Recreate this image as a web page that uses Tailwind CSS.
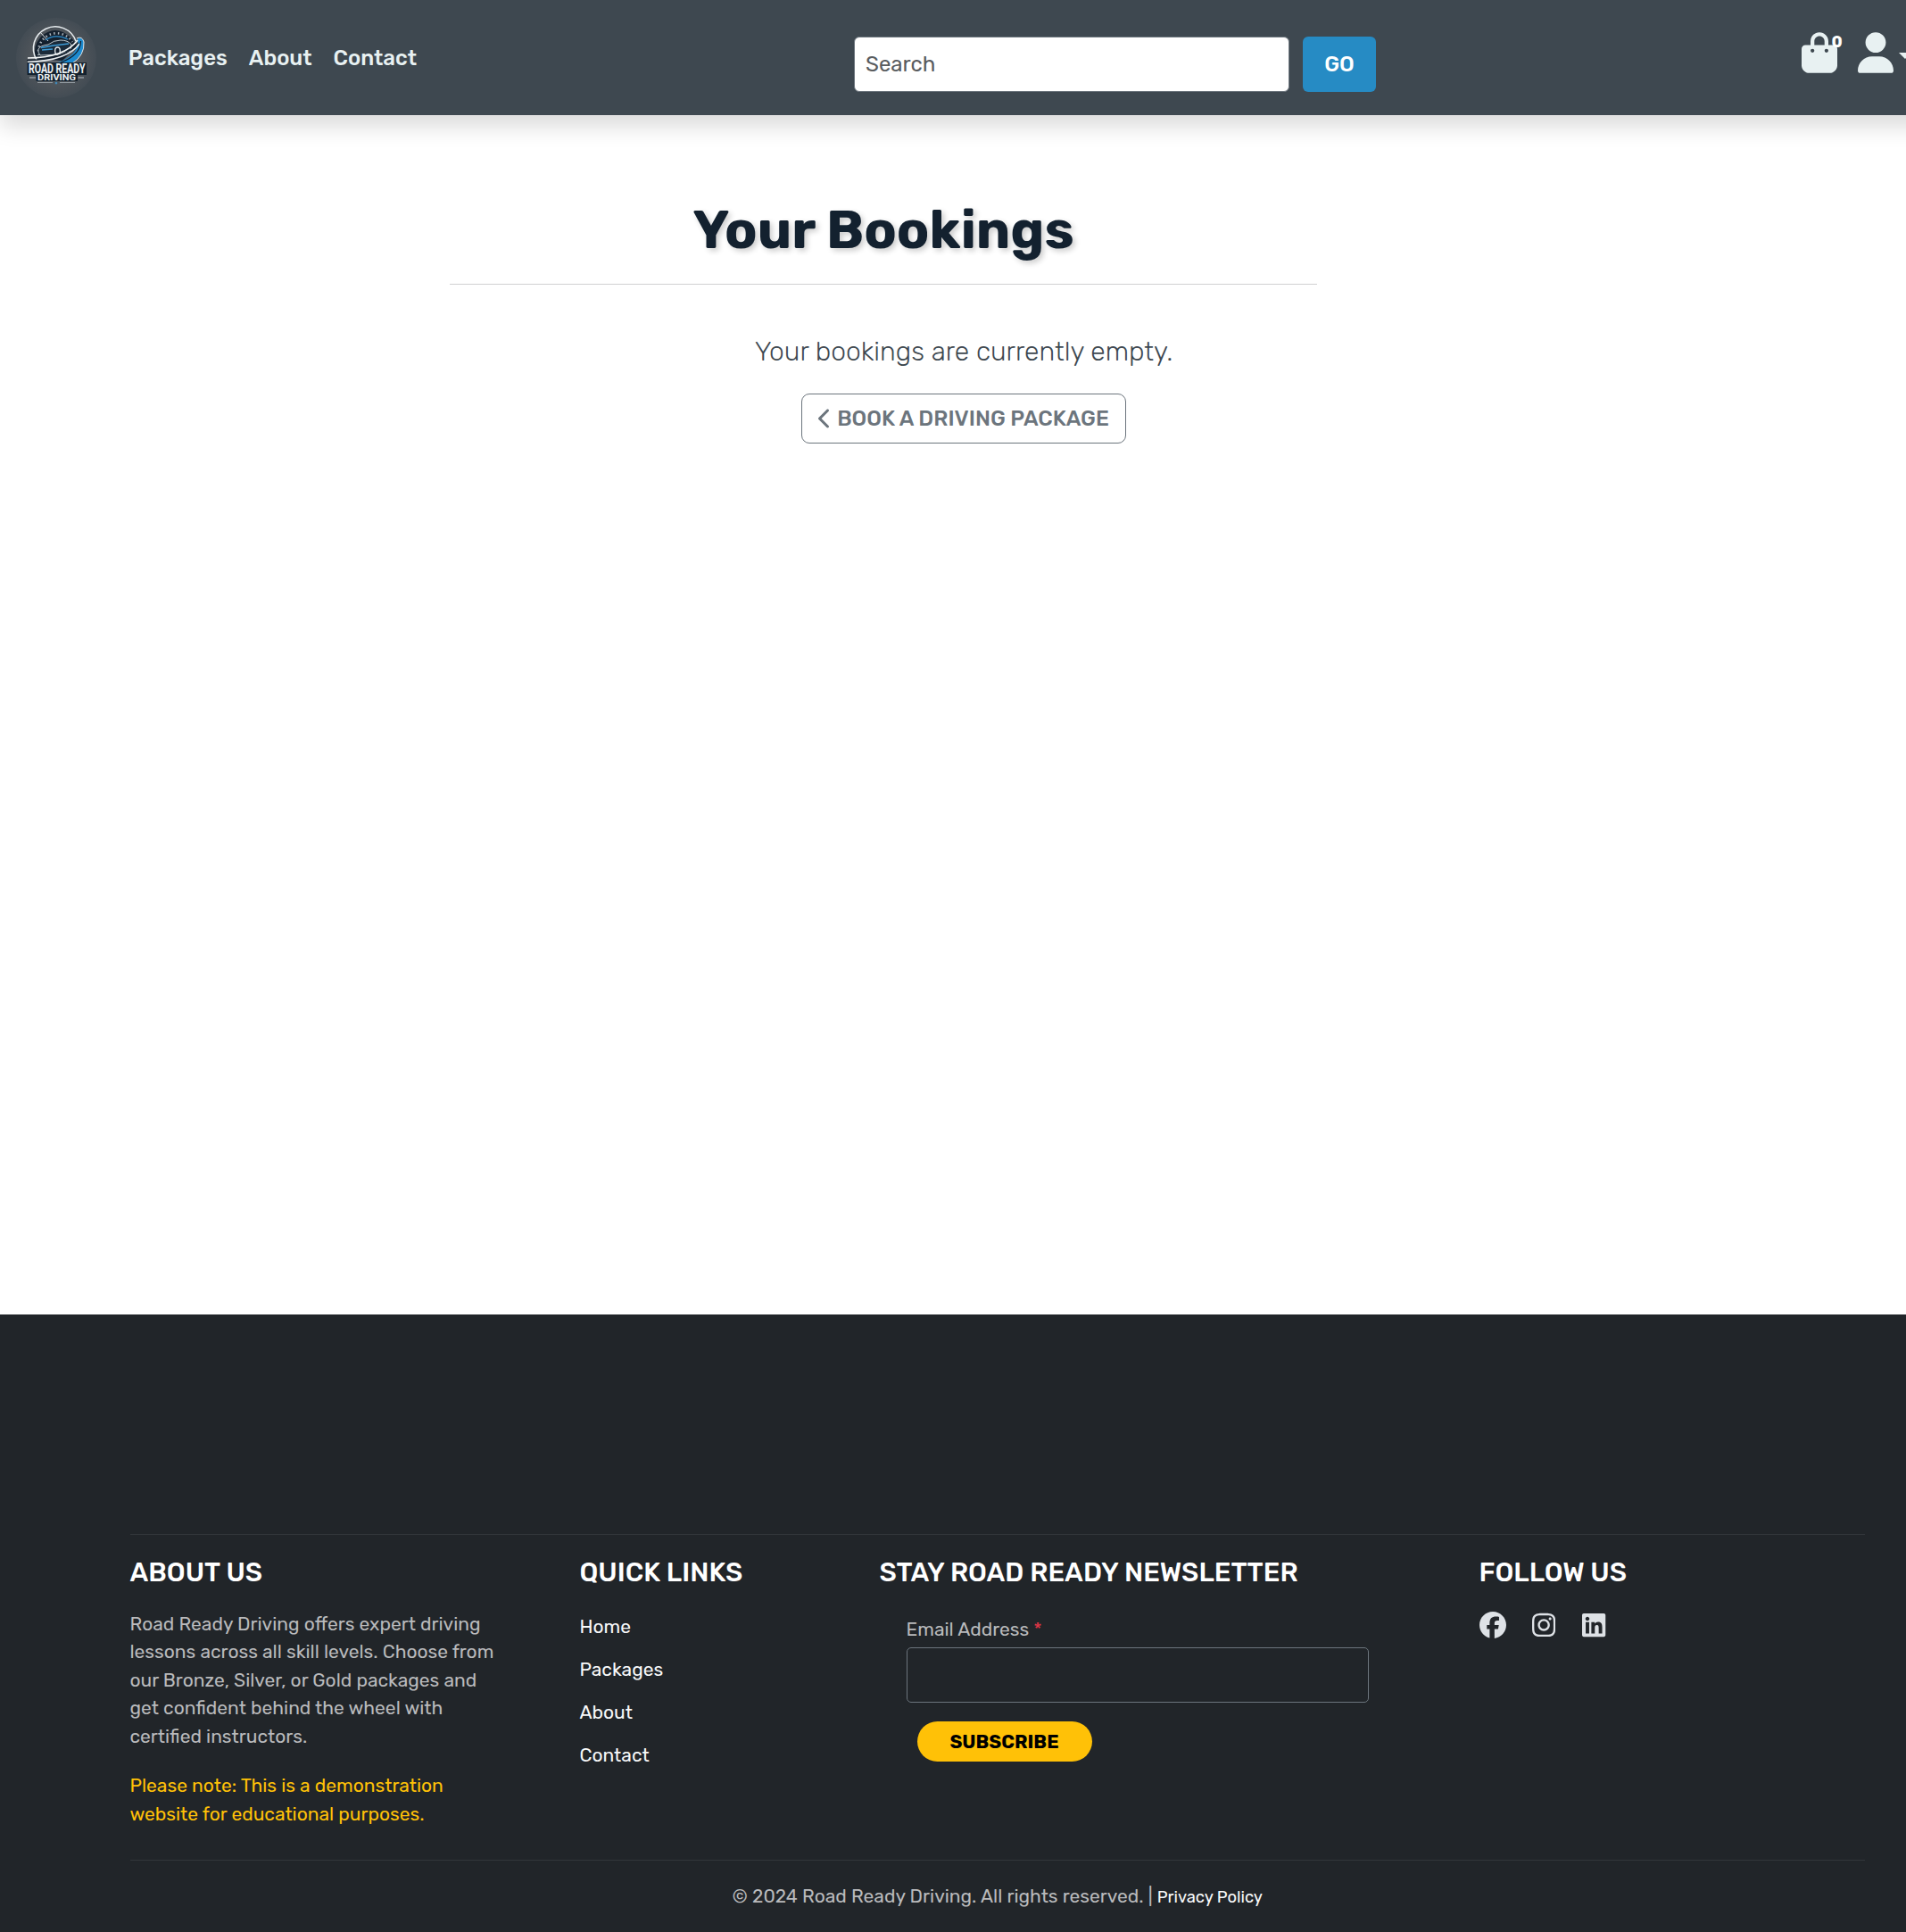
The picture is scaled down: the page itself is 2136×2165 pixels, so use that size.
<!DOCTYPE html>
<html lang="en">
<head>
<meta charset="utf-8">
<title>Road Ready Driving</title>
<script src="https://cdn.jsdelivr.net/npm/@tailwindcss/browser@4"></script>
</head>
<body class="flex h-[2165px] w-full flex-col overflow-hidden bg-white font-['Rubik',Roboto,sans-serif]">

<header class="flex h-[129px] w-[2172px] shrink-0 items-start bg-[#3e4850] shadow-[0_12px_24px_rgba(0,0,0,0.15)]">
  <a class="mt-5 ml-[18px] block size-[90px] shrink-0">
    <svg class="size-[90px] overflow-visible" viewBox="18 20 90 90" role="img" aria-label="Road Ready Driving">
      <defs>
        <radialGradient id="disc"><stop offset="0" stop-color="#666a70"/><stop offset=".7" stop-color="#4d5359"/><stop offset="1" stop-color="#434c54"/></radialGradient>
      </defs>
      <circle cx="63" cy="65" r="45" fill="url(#disc)"/>
      <path d="M40 66 Q36 52 46 41 Q62 27 78 41 Q84 46 86 52 L70 68 Z" fill="#14202e"/>
      <path d="M41 67 A24.500 24.500 0 1 1 85 46" fill="none" stroke="#e6ebee" stroke-width="1.600"/>
      <path d="M43.500 62 A20.500 20.500 0 0 1 81 47" fill="none" stroke="#a9b3bb" stroke-width="2.600" stroke-dasharray="1.500 3.200"/>
      <path d="M45 36 L54 46" stroke="#dfe5e8" stroke-width="1"/>
      <path d="M51 45 Q62 37 76 44" fill="none" stroke="#2a7fb8" stroke-width="1.400"/>
      <path d="M43 55 Q45 51 54 50 Q60 45 68 45 Q76 45 80 50 L79 57 L66 61 L45 62 Q42 58 43 55 Z" fill="#1b2b3a" stroke="#cfd8dd" stroke-width=".9"/>
      <path d="M46 53.500 L60 51 L77 49 M47 56 L59 55" stroke="#3d9bd6" stroke-width="1.400"/>
      <ellipse cx="64.500" cy="57" rx="2.800" ry="4" fill="#14202e" stroke="#e6ebee" stroke-width="1.300"/>
      <path d="M62 71 Q90 62 87 43 Q92 41 94 47 Q95 62 80 71 Z" fill="#1c8ad0"/>
      <path d="M31 65 Q72 65 87 45" fill="none" stroke="#f1f4f5" stroke-width="1.700"/>
      <path d="M30 67.500 Q72 67 88 48" fill="none" stroke="#14202e" stroke-width="1.200"/>
      <path d="M31 69.500 Q76 68 89 49" fill="none" stroke="#e6ebee" stroke-width="1.500"/>
      <path d="M68 70 Q90 62 90.500 46" fill="none" stroke="#14202e" stroke-width="1.300"/>
      <path d="M86 43 Q92 40 94 47 Q95 62 81 71" fill="none" stroke="#dfe5e8" stroke-width="1"/>
      <path d="M30.500 70 H97 V84 H87 V91 H40.500 V84 H30.500 Z" fill="#14222f"/>
      <text x="32" y="82" textLength="63.500" lengthAdjust="spacingAndGlyphs" class="fill-[#eef2f4] font-['Roboto'] text-[15px] font-bold">ROAD READY</text>
      <text x="42" y="90.300" textLength="43" lengthAdjust="spacingAndGlyphs" class="fill-[#eef2f4] font-['Roboto'] text-[8.500px] font-bold">DRIVING</text>
      <path d="M33 87 H40 M87.500 87 H94" stroke="#b9c0c5" stroke-width="1.200"/>
      <path d="M42 92.500 H59 M67 92.500 H84" stroke="#99a1a7" stroke-width=".9"/>
      <path d="M63 91.500 l1.500 1.600 l-1.500 1.600 l-1.500 -1.600z" fill="#3d8fc4"/>
    </svg>
  </a>
  <nav class="mt-[47px] ml-[35.750px] flex w-[813.250px] shrink-0 gap-6 text-2xl leading-9 font-medium text-[#e8f1f2]">
    <a>Packages</a><a>About</a><a>Contact</a>
  </nav>
  <form class="mt-[41px] flex shrink-0 gap-[15px] text-2xl">
    <div class="flex h-[62px] w-[488px] items-center rounded-md border border-[#6c757d] bg-white px-3 text-[#595c5f]">Search</div>
    <div class="flex h-[62px] w-[82px] items-center justify-center rounded-md bg-[#268bc4] font-medium text-white">GO</div>
  </form>
  <div class="mt-9 ml-[477px] flex shrink-0 text-[#e8f1f2]">
    <div class="relative">
      <svg class="h-[46px] w-[40px]" viewBox="0 0 448 512" fill="currentColor"><path d="M160 112c0-35.300 28.700-64 64-64s64 28.700 64 64v48H160V112zm-48 48H48c-26.500 0-48 21.500-48 48V416c0 53 43 96 96 96H352c53 0 96-43 96-96V208c0-26.500-21.500-48-48-48H336V112C336 50.100 285.900 0 224 0S112 50.100 112 112v48zm24 48a24 24 0 1 1 0 48 24 24 0 1 1 0-48zm152 24a24 24 0 1 1 48 0 24 24 0 1 1 -48 0z"/></svg>
      <span class="absolute top-[2px] left-[33.500px] text-lg leading-[18px] font-bold text-white">0</span>
    </div>
    <svg class="ml-[23px] h-[46px] w-[40px]" viewBox="0 0 448 512" fill="currentColor"><path d="M224 256A128 128 0 1 0 224 0a128 128 0 1 0 0 256zm-45.700 48C79.800 304 0 383.800 0 482.300C0 498.700 13.300 512 29.700 512H418.300c16.400 0 29.700-13.300 29.700-29.700C448 383.800 368.200 304 269.700 304H178.300z"/></svg>
    <svg class="mt-[23px] ml-[6px] h-[7px] w-[14px]" viewBox="0 0 14 7" fill="currentColor"><path d="M0 0H14L7 7z"/></svg>
  </div>
</header>

<main class="flex h-[1344px] shrink-0 flex-col">
  <h1 class="mt-[93px] ml-[504px] w-[972px] border-b border-[#d0d1d2] pb-6 text-center text-[60px] leading-[72px] font-bold text-[#13212f] text-shadow-[3px_3px_6px_rgba(0,0,0,0.2)]">Your Bookings</h1>
  <div class="mt-[53px] ml-[589px] flex w-[982px] flex-col items-center">
    <p class="text-[30px] leading-[45px] font-light text-[#3e4850]">Your bookings are currently empty.</p>
    <a class="mt-[24px] flex h-[56px] w-[364px] items-center justify-center gap-[6px] rounded-[9px] border border-[#6c757d] text-2xl leading-9 font-medium text-[#6c757d]">
      <svg class="h-6 w-[15px]" viewBox="0 0 320 512" fill="currentColor"><path d="M9.400 233.400c-12.500 12.500-12.500 32.800 0 45.300l192 192c12.500 12.500 32.800 12.500 45.300 0s12.500-32.800 0-45.300L77.300 256 246.600 86.600c12.500-12.500 12.500-32.800 0-45.300s-32.800-12.500-45.300 0l-192 192z"/></svg>
      <span>BOOK A DRIVING PACKAGE</span>
    </a>
  </div>
</main>

<footer class="h-[692px] shrink-0 bg-[#212529] pt-[246px] pr-[46px] pl-[145.500px]">
  <div class="grid h-[365px] grid-cols-[504px_336px_672px_1fr] border-t border-[#32363a] pt-6 text-[21px] leading-[31.500px] text-white">
    <section>
      <h2 class="text-[30px] leading-9 font-medium">ABOUT US</h2>
      <p class="mt-[23.500px] text-[#b9babc]">Road Ready Driving offers expert driving<br>lessons across all skill levels. Choose from<br>our Bronze, Silver, or Gold packages and<br>get confident behind the wheel with<br>certified instructors.</p>
      <p class="mt-6 text-[#ffc107]">Please note: This is a demonstration<br>website for educational purposes.</p>
    </section>
    <section>
      <h2 class="text-[30px] leading-9 font-medium">QUICK LINKS</h2>
      <ul class="mt-6 flex flex-col gap-3 text-2xl leading-9 text-[#f8f9fa]">
        <li class="h-9"><a class="text-[21px]">Home</a></li>
        <li class="h-9"><a class="text-[21px]">Packages</a></li>
        <li class="h-9"><a class="text-[21px]">About</a></li>
        <li class="h-9"><a class="text-[21px]">Contact</a></li>
      </ul>
    </section>
    <section>
      <h2 class="text-[30px] leading-9 font-medium">STAY ROAD READY NEWSLETTER</h2>
      <div class="mt-[30px] ml-[30px] flex flex-col items-start">
        <label class="text-[#b9babc]">Email Address <span class="text-[#dc3545]">*</span></label>
        <div class="mt-[4.500px] h-[62px] w-[518px] rounded-[5px] border border-[#6c757d]"></div>
        <div class="mt-[21px] ml-3 flex h-[45px] w-[196px] items-center justify-center rounded-[22.500px] bg-[#ffc107] font-bold text-black">SUBSCRIBE</div>
      </div>
    </section>
    <section>
      <h2 class="text-[30px] leading-9 font-medium">FOLLOW US</h2>
      <div class="mt-[25.500px] flex text-[#dee2e6]">
        <svg class="size-[30px]" viewBox="0 0 512 512" fill="currentColor"><path d="M512 256C512 114.600 397.400 0 256 0S0 114.600 0 256C0 376 82.700 476.800 194.200 504.500V334.200H141.400V256h52.800V222.300c0-87.100 39.400-127.500 125-127.500c16.200 0 44.200 3.200 55.700 6.400V172c-6-.6-16.500-1-29.600-1c-42 0-58.200 15.900-58.200 57.200V256h83.600l-14.400 78.200H287V510.100C413.800 494.800 512 386.900 512 256h0z"/></svg>
        <svg class="ml-[29.500px] h-[30px] w-[26.250px]" viewBox="0 0 448 512" fill="currentColor"><path d="M224.100 141c-63.600 0-114.900 51.300-114.900 114.900s51.300 114.900 114.900 114.900S339 319.500 339 255.900 287.700 141 224.100 141zm0 189.600c-41.100 0-74.700-33.500-74.700-74.700s33.500-74.700 74.700-74.700 74.700 33.500 74.700 74.700-33.600 74.700-74.700 74.700zm146.400-194.300c0 14.900-12 26.800-26.800 26.800-14.900 0-26.800-12-26.800-26.800s12-26.800 26.800-26.800 26.800 12 26.800 26.800zm76.100 27.200c-1.700-35.900-9.900-67.700-36.200-93.900-26.200-26.200-58-34.400-93.900-36.200-37-2.100-147.900-2.100-184.900 0-35.800 1.700-67.600 9.900-93.900 36.100s-34.400 58-36.200 93.900c-2.100 37-2.100 147.900 0 184.900 1.700 35.900 9.900 67.700 36.200 93.900s58 34.400 93.900 36.200c37 2.100 147.900 2.100 184.900 0 35.900-1.700 67.700-9.900 93.900-36.200 26.200-26.200 34.400-58 36.200-93.900 2.100-37 2.100-147.800 0-184.800zM398.800 388c-7.800 19.600-22.900 34.700-42.600 42.600-29.500 11.700-99.500 9-132.100 9s-102.700 2.600-132.100-9c-19.600-7.800-34.700-22.900-42.600-42.600-11.700-29.500-9-99.500-9-132.100s-2.600-102.700 9-132.100c7.800-19.600 22.900-34.700 42.600-42.600 29.500-11.700 99.500-9 132.100-9s102.700-2.600 132.100 9c19.600 7.800 34.700 22.900 42.600 42.600 11.700 29.500 9 99.500 9 132.100s2.700 102.700-9 132.100z"/></svg>
        <svg class="ml-[30px] h-[30px] w-[26.250px]" viewBox="0 0 448 512" fill="currentColor"><path d="M416 32H31.900C14.300 32 0 46.500 0 64.300v383.400C0 465.500 14.300 480 31.900 480H416c17.600 0 32-14.500 32-32.300V64.300c0-17.800-14.400-32.300-32-32.300zM135.400 416H69V202.200h66.500V416zm-33.200-243c-21.300 0-38.500-17.300-38.500-38.500S80.900 96 102.200 96c21.200 0 38.500 17.300 38.500 38.500 0 21.300-17.200 38.500-38.500 38.500zm282.100 243h-66.400V312c0-24.800-.5-56.700-34.500-56.700-34.600 0-39.900 27-39.900 54.900V416h-66.400V202.200h63.700v29.200h.9c8.900-16.800 30.600-34.500 62.900-34.500 67.200 0 79.700 44.300 79.700 101.900V416z"/></svg>
      </div>
    </section>
  </div>
  <div class="border-t border-[#32363a] pt-6 text-center text-[21px] leading-[31.500px] text-[#b9babc]">© 2024 Road Ready Driving. All rights reserved. | <a class="text-[18.375px] leading-none text-[#f8f9fa]">Privacy Policy</a></div>
</footer>
</body>
</html>
